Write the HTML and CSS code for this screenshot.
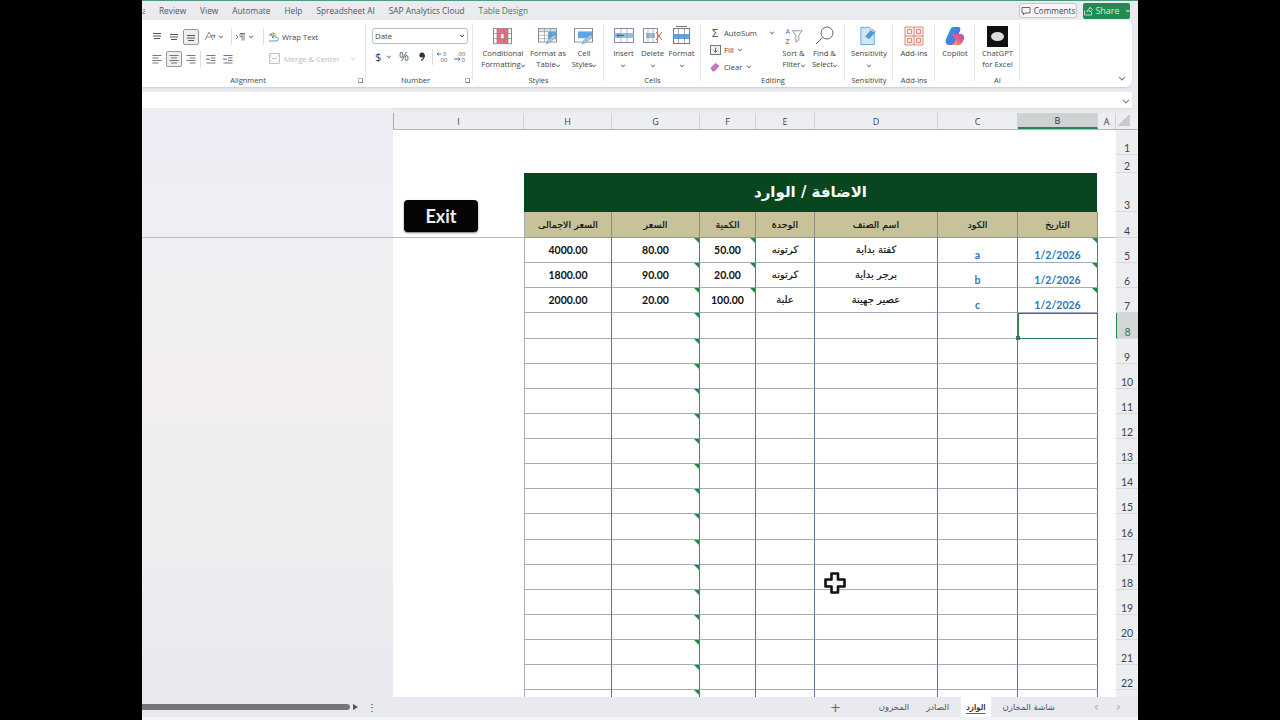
FILE: index.html
```html
<!DOCTYPE html>
<html lang="en">
<head>
<meta charset="utf-8">
<title>Sheet</title>
<link rel="stylesheet" href="styles.css">
</head>
<body>
<div class="screen">
<div class="window">
  <div class="tabs">
    <div class="tablist">
      <span class="cut">a</span><span>Review</span><span>View</span><span>Automate</span><span>Help</span><span>Spreadsheet AI</span><span>SAP Analytics Cloud</span><span class="tgreen">Table Design</span>
    </div>
    <div class="tabactions">
      <span class="comments"><svg width="10" height="10" viewBox="0 0 10 10"><path d="M1 1.500h8v5.500H4L2.500 8.700V7H1z" fill="none" stroke="#444" stroke-width=".8"/></svg>Comments</span>
      <span class="share"><svg width="10" height="10" viewBox="0 0 10 10"><path d="M1.500 4.500v4.500h7V6M4 6c0-2 1.500-3.500 3-3.500V1l2.500 2.500L7 6V4.500c-1 0-2 .5-3 1.500" fill="none" stroke="#d6eee0" stroke-width=".8"/></svg>Share<i class="chev cw"></i></span>
    </div>
  </div>

  <div class="ribbon">
    <div class="group galign">
      <div class="gbody acol">
        <div class="arow">
          <span class="ic"><svg width="12" height="10" viewBox="0 0 12 10"><path d="M2 1.500h8M2 4h8M3 6.500h6" stroke="#555"/></svg></span>
          <span class="ic"><svg width="12" height="10" viewBox="0 0 12 10"><path d="M2 2.500h8M2 5h8M3 7.500h6" stroke="#555"/></svg></span>
          <span class="ic sel"><svg width="12" height="10" viewBox="0 0 12 10"><path d="M2 3.500h8M2 6h8M3 8.500h6" stroke="#555"/></svg></span>
          <span class="ic orient"><svg width="12" height="11" viewBox="0 0 12 11"><path d="M1 9L5 1l4 8M2.500 6h5" stroke="#777" fill="none" stroke-width=".8"/><path d="M7 5l4-1-1 3" stroke="#2a79c4" fill="none"/></svg><i class="chev"></i></span>
          <span class="vsep"></span>
          <span class="ic dirn"><svg width="11" height="10" viewBox="0 0 11 10"><path d="M1 3l2 2-2 2M5 1.500h5M7 1.500v7M9 1.500v7M7 5C4 5 4 1.500 7 1.500" stroke="#555" fill="none" stroke-width=".8"/></svg><i class="chev"></i></span>
          <span class="vsep"></span>
          <span class="ic"><svg width="13" height="12" viewBox="0 0 13 12"><text x="2" y="5" class="svgt">ab</text><path d="M2 10h7c3 0 3-4 0-4H5M6.500 4.500L5 6l1.500 1.500" stroke="#2a79c4" fill="none" stroke-width=".8"/></svg></span>
          <span class="atext">Wrap Text</span>
        </div>
        <div class="arow">
          <span class="ic"><svg width="12" height="10" viewBox="0 0 12 10"><path d="M1.500 1.500h9M1.500 4h6M1.500 6.500h9M1.500 9h6" stroke="#555" stroke-width=".8"/></svg></span>
          <span class="ic sel"><svg width="12" height="10" viewBox="0 0 12 10"><path d="M1.500 1.500h9M3 4h6M1.500 6.500h9M3 9h6" stroke="#555" stroke-width=".8"/></svg></span>
          <span class="ic"><svg width="12" height="10" viewBox="0 0 12 10"><path d="M1.500 1.500h9M4.500 4h6M1.500 6.500h9M4.500 9h6" stroke="#555" stroke-width=".8"/></svg></span>
          <span class="vsep"></span>
          <span class="ic"><svg width="12" height="10" viewBox="0 0 12 10"><path d="M1.500 1.500h9M6 4h4.500M6 6.500h4.500M1.500 9h9" stroke="#555" stroke-width=".8"/><path d="M5 5.200H1" stroke="#2a79c4"/></svg></span>
          <span class="ic"><svg width="12" height="10" viewBox="0 0 12 10"><path d="M1.500 1.500h9M6 4h4.500M6 6.500h4.500M1.500 9h9" stroke="#555" stroke-width=".8"/><path d="M1 5.200h4" stroke="#2a79c4"/></svg></span>
          <span class="ic mergei"><svg width="11" height="11" viewBox="0 0 11 11"><path d="M.5.500h10v10H.5zM3 5.500h5M.5 3h2M8.500 3h2M.5 8h2M8.500 8h2" stroke="#c4c4c4" fill="none"/></svg></span>
          <span class="atext off">Merge &amp; Center</span><i class="chev offc"></i>
        </div>
      </div>
      <div class="glabel">Alignment</div>
      <i class="launcher"></i>
    </div>

    <div class="group gnumber">
      <div class="gbody ncol">
        <div class="combo"><span>Date</span><i class="chev dark"></i></div>
        <div class="nrow">
          <span class="dollar">$</span><i class="chev"></i><span class="pct">%</span>
          <svg class="comma" width="6" height="9" viewBox="0 0 6 9"><circle cx="3" cy="3" r="2.600" fill="#333"/><path d="M5.500 3c0 3-1.500 4.500-3.500 5.500" stroke="#333" fill="none" stroke-width="1.200"/></svg>
          <span class="vsep"></span>
          <svg width="14" height="11" viewBox="0 0 14 11"><path d="M1 3h4M2.500 1.500L1 3l1.500 1.500" stroke="#2a79c4" fill="none"/><text x="7" y="5" class="svgt">0</text><text x="3" y="10.500" class="svgt">.00</text></svg>
          <svg width="14" height="11" viewBox="0 0 14 11"><text x="4" y="5" class="svgt">.00</text><path d="M1 8h6M5.500 6.500L7 8 5.500 9.500" stroke="#2a79c4" fill="none"/><text x="8.500" y="10.500" class="svgt">0</text></svg>
        </div>
      </div>
      <div class="glabel">Number</div>
      <i class="launcher"></i>
    </div>

    <div class="group gstyles">
      <div class="gbody big">
        <div class="bigb wcf"><svg class="flat" preserveAspectRatio="none" width="20" height="20" viewBox="0 0 20 20"><rect x=".5" y=".5" width="18" height="18" fill="#fff" stroke="#888"/><path d="M4 .5h11v6H4zM4 12.500h11v6H4z" fill="#ee6d80"/><path d="M11 6.500h4v6h-4zM4 6.500h4v6H4z" fill="#ee6d80"/><path d="M.5 6.500h18M.5 12.500h18M4 .5v18M11 .5v18M15 .5v18" stroke="#777" stroke-width=".7" fill="none"/></svg><span>Conditional<br>Formatting<i class="chev"></i></span></div>
        <div class="bigb wft"><svg class="flat" preserveAspectRatio="none" width="20" height="20" viewBox="0 0 20 20"><rect x=".5" y=".5" width="18" height="16" fill="#fff" stroke="#888"/><rect x=".5" y=".5" width="18" height="4" fill="#cfe0f2" stroke="#888" stroke-width=".7"/><path d="M10 4.500h8.500v8H10z" fill="#5da5e6"/><path d="M.5 8.500h18M.5 12.500h18M6.500 .5v16M12.500 .5v16" stroke="#888" stroke-width=".6"/><path d="M8 19l2-5 6-6 3 2-6 6z" fill="#a9c6dd" stroke="#5f8fb3" stroke-width=".6"/></svg><span>Format as<br>Table<i class="chev"></i></span></div>
        <div class="bigb wcs"><svg class="flat" preserveAspectRatio="none" width="20" height="20" viewBox="0 0 20 20"><rect x=".5" y=".5" width="18" height="16" fill="#fff" stroke="#888"/><path d="M4 4h14v8H4z" fill="#5da5e6"/><path d="M8 19l2-5 6-6 3 2-6 6z" fill="#a9c6dd" stroke="#5f8fb3" stroke-width=".6"/></svg><span>Cell<br>Styles<i class="chev"></i></span></div>
      </div>
      <div class="glabel">Styles</div>
    </div>

    <div class="group gcells">
      <div class="gbody big">
        <div class="bigb w29"><svg width="20" height="20" viewBox="0 0 20 20"><rect x=".5" y="2.500" width="19" height="14" fill="#fff" stroke="#88a"/><rect x=".5" y="7" width="19" height="5" fill="#8fc0ea"/><path d="M7 2.500v14M13 2.500v14" stroke="#888" stroke-width=".6"/><path d="M10 9.500H3M5 7.500l-2 2 2 2" stroke="#1d6fbd" fill="none"/></svg><span>Insert<br><i class="chev"></i></span></div>
        <div class="bigb w29"><svg width="20" height="20" viewBox="0 0 20 20"><rect x=".5" y="2.500" width="14" height="14" fill="#fff" stroke="#88a"/><rect x="3" y="7" width="9" height="5" fill="#8fc0ea"/><path d="M5 2.500v14M10 2.500v14" stroke="#888" stroke-width=".6"/><path d="M13 6l6 8M19 6l-6 8" stroke="#d8604f" stroke-width="1"/></svg><span>Delete<br><i class="chev"></i></span></div>
        <div class="bigb w29"><svg width="20" height="20" viewBox="0 0 20 20"><rect x="1.500" y="2.500" width="16" height="15" fill="#fff" stroke="#777"/><rect x="1.500" y="8" width="16" height="5" fill="#5da5e6"/><path d="M6.500 2.500v15M12.500 2.500v15" stroke="#777" stroke-width=".6"/><path d="M4 .5h11" stroke="#777"/></svg><span>Format<br><i class="chev"></i></span></div>
      </div>
      <div class="glabel">Cells</div>
    </div>

    <div class="group gediting">
      <div class="gbody big start">
        <div class="ecol">
          <div class="erow"><span class="eic sigma">Σ</span><span>AutoSum</span><i class="chev gapc"></i></div>
          <div class="erow"><span class="eic"><svg width="11" height="10" viewBox="0 0 11 10"><rect x=".5" y=".5" width="10" height="9" fill="#eef3f8" stroke="#777"/><path d="M5.500 2.500v5M3.500 5.500l2 2 2-2" stroke="#2a79c4" fill="none"/></svg></span><span>Fill</span><i class="chev"></i></div>
          <div class="erow"><span class="eic"><svg width="10" height="10" viewBox="0 0 11 11"><path d="M1 6.500L6 1.500l4 3-5 5.500H3z" fill="#c874c8" stroke="#a04fa0" stroke-width=".6"/></svg></span><span>Clear</span><i class="chev"></i></div>
        </div>
        <div class="bigb w31"><svg width="20" height="20" viewBox="0 0 20 21"><text x="1" y="8.500" class="svga">A</text><text x="1" y="19" class="svgz">Z</text><path d="M8.500 5h10L15 10v5l-3 2v-7z" fill="#fff" stroke="#777" stroke-width=".8"/></svg><span>Sort &amp;<br>Filter<i class="chev"></i></span></div>
        <div class="bigb w31"><svg width="22" height="20" viewBox="0 0 22 20"><circle cx="13" cy="7" r="6" fill="#fff" stroke="#666"/><path d="M8.500 11.500L2 18" stroke="#666"/></svg><span>Find &amp;<br>Select<i class="chev"></i></span></div>
      </div>
      <div class="glabel">Editing</div>
    </div>

    <div class="group gsens">
      <div class="gbody big"><div class="bigb w48"><svg width="20" height="21" viewBox="0 0 20 21"><path d="M1.500 1.500h9l5 5v13h-14z" fill="#cfe6f7" stroke="#5fa7dc"/><path d="M6 11l7-8 4 3-7 8z" fill="#4f9bd8"/><path d="M12 4l3 2" stroke="#fff"/></svg><span>Sensitivity<br><i class="chev"></i></span></div></div>
      <div class="glabel">Sensitivity</div>
    </div>

    <div class="group gaddin">
      <div class="gbody big"><div class="bigb w42"><svg width="20" height="20" viewBox="0 0 20 20"><path d="M1 1h18v18H1zM1 10h18M10 1v18M3.500 3.500h4v4h-4zM12.500 3.500h4v4h-4zM3.500 12.500h4v4h-4zM12.500 12.500h4v4h-4z" fill="#fbeeea" stroke="#d9705d" stroke-width=".8"/></svg><span>Add-ins</span></div></div>
      <div class="glabel">Add-ins</div>
    </div>

    <div class="group gcop">
      <div class="gbody big"><div class="bigb w40"><svg width="20" height="20" viewBox="0 0 20 20"><defs><linearGradient id="cpa" x1="0" y1="0" x2="1" y2="1"><stop offset="0" stop-color="#18b6c9"/><stop offset=".5" stop-color="#3f7ee8"/><stop offset="1" stop-color="#b44fd8"/></linearGradient><linearGradient id="cpb" x1="0" y1="1" x2="1" y2="0"><stop offset="0" stop-color="#f4a62a"/><stop offset=".55" stop-color="#e85b8b"/><stop offset="1" stop-color="#8b5be0"/></linearGradient></defs><path d="M8 1h5c2 0 3 1 2 4l-4 9c-1 3-2 5-5 5H4C1 19 0 16 1 13l4-9C6 2 6.500 1 8 1z" fill="url(#cpa)"/><path d="M7 8h8c3 0 5 2 4 5l-1 2c-1 3-3 4-5 4H8c2-1 3-3 3-5z" fill="url(#cpb)"/></svg><span>Copilot</span></div></div>
      <div class="glabel">&nbsp;</div>
    </div>

    <div class="group gai">
      <div class="gbody big"><div class="bigb w44"><span class="gptlogo"><i></i></span><span>ChatGPT<br>for Excel</span></div></div>
      <div class="glabel">AI</div>
    </div>
    <div class="rest"><i class="chev big-chev"></i></div>
  </div>

  <div class="formula"><i class="chev big-chev"></i></div>

  <div class="sheet">
    <div class="gutter"><div class="panel"></div></div>
    <div class="gridwrap">
      <div class="row head">
        <span>I</span><span>H</span><span>G</span><span>F</span><span>E</span><span>D</span><span>C</span><span class="hsel">B</span><span>A</span><span class="corner"></span>
      </div>
      <div class="row r25 blank"><span class="rn">1</span></div>
      <div class="row r18 blank"><span class="rn">2</span></div>
      <div class="row r39">
        <span class="free"></span><span class="title">الاضافة / الوارد</span><span class="free"></span><span class="rn">3</span>
      </div>
      <div class="row r26 colhead">
        <span class="free"></span><span>السعر الاجمالى</span><span>السعر</span><span>الكمية</span><span>الوحدة</span><span>اسم الصنف</span><span>الكود</span><span>التاريخ</span><span class="free"></span><span class="rn">4</span>
      </div>
      <div class="row data">
        <span class="free"></span><span>4000.00</span><span class="tick">80.00</span><span class="tick">50.00</span><span class="ar">كرتونه</span><span class="ar">كفتة بداية</span><span class="blue">a</span><span class="blue tick">1/2/2026</span><span class="free"></span><span class="rn">5</span>
      </div>
      <div class="row data">
        <span class="free"></span><span>1800.00</span><span class="tick">90.00</span><span class="tick">20.00</span><span class="ar">كرتونه</span><span class="ar">برجر بداية</span><span class="blue">b</span><span class="blue tick">1/2/2026</span><span class="free"></span><span class="rn">6</span>
      </div>
      <div class="row data">
        <span class="free"></span><span>2000.00</span><span class="tick">20.00</span><span class="tick">100.00</span><span class="ar">علبة</span><span class="ar">عصير جهينة</span><span class="blue">c</span><span class="blue tick">1/2/2026</span><span class="free"></span><span class="rn">7</span>
      </div>
      <div class="row data"><span class="free"></span><span></span><span class="tick"></span><span></span><span></span><span></span><span></span><span class="active"></span><span class="free"></span><span class="rn rsel">8</span></div>
      <div class="row data"><span class="free"></span><span></span><span class="tick"></span><span></span><span></span><span></span><span></span><span></span><span class="free"></span><span class="rn">9</span></div>
      <div class="row data"><span class="free"></span><span></span><span class="tick"></span><span></span><span></span><span></span><span></span><span></span><span class="free"></span><span class="rn">10</span></div>
      <div class="row data"><span class="free"></span><span></span><span class="tick"></span><span></span><span></span><span></span><span></span><span></span><span class="free"></span><span class="rn">11</span></div>
      <div class="row data"><span class="free"></span><span></span><span class="tick"></span><span></span><span></span><span></span><span></span><span></span><span class="free"></span><span class="rn">12</span></div>
      <div class="row data"><span class="free"></span><span></span><span class="tick"></span><span></span><span></span><span></span><span></span><span></span><span class="free"></span><span class="rn">13</span></div>
      <div class="row data"><span class="free"></span><span></span><span class="tick"></span><span></span><span></span><span></span><span></span><span></span><span class="free"></span><span class="rn">14</span></div>
      <div class="row data"><span class="free"></span><span></span><span class="tick"></span><span></span><span></span><span></span><span></span><span></span><span class="free"></span><span class="rn">15</span></div>
      <div class="row data"><span class="free"></span><span></span><span class="tick"></span><span></span><span></span><span></span><span></span><span></span><span class="free"></span><span class="rn">16</span></div>
      <div class="row data"><span class="free"></span><span></span><span class="tick"></span><span></span><span></span><span></span><span></span><span></span><span class="free"></span><span class="rn">17</span></div>
      <div class="row data"><span class="free"></span><span></span><span class="tick"></span><span></span><span></span><span></span><span></span><span></span><span class="free"></span><span class="rn">18</span></div>
      <div class="row data"><span class="free"></span><span></span><span class="tick"></span><span></span><span></span><span></span><span></span><span></span><span class="free"></span><span class="rn">19</span></div>
      <div class="row data"><span class="free"></span><span></span><span class="tick"></span><span></span><span></span><span></span><span></span><span></span><span class="free"></span><span class="rn">20</span></div>
      <div class="row data"><span class="free"></span><span></span><span class="tick"></span><span></span><span></span><span></span><span></span><span></span><span class="free"></span><span class="rn">21</span></div>
      <div class="row data"><span class="free"></span><span></span><span class="tick"></span><span></span><span></span><span></span><span></span><span></span><span class="free"></span><span class="rn">22</span></div>
      <div class="row data"><span class="free"></span><span></span><span class="tick"></span><span></span><span></span><span></span><span></span><span></span><span class="free"></span><span class="rn"></span></div>
      <button class="exit">Exit</button>
      <svg class="cursor" width="24" height="24" viewBox="0 0 24 24"><path d="M8.500 2.500h6.500v6h6.500v7H15v6H8.500v-6H2.500v-7h6z" fill="#f4f6fa" stroke="#111" stroke-width="2.600" stroke-linejoin="round"/></svg>
    </div>
  </div>

  <div class="bottom">
    <div class="hscroll"><span class="thumb"></span><i class="arrow"></i><span class="dots">⋮</span></div>
    <div class="sheets">
      <span class="plus">+</span>
      <span class="stab">المخزون</span><span class="stab">الصادر</span><span class="stab on">الوارد</span><span class="stab">شاشة المخازن</span>
      <span class="nav first">‹</span><span class="nav">›</span>
    </div>
  </div>
</div>
</div>
</body>
</html>
```
FILE: styles.css
```css
* { box-sizing: border-box; }
html, body { margin: 0; height: 100%; background: #000; overflow: hidden; }
.screen { width: 1280px; height: 720px; display: flex; justify-content: center; background: #000; }
.window { width: 996px; height: 720px; background: #e9ebf0; border-top: 1px solid #4f9a7e; display: flex; flex-direction: column; font-family: "Open Sans", "Noto Sans", sans-serif; color: #444; font-size: 8px; overflow: hidden; }

.chev { display: inline-block; width: 4px; height: 4px; border-right: 1px solid #666; border-bottom: 1px solid #666; transform: rotate(45deg) scale(.8); margin: 0 0 2px 4px; flex: none; }
.chev.cw { border-color: #dff; }

.tabs { height: 19px; display: flex; justify-content: space-between; align-items: center; padding-right: 8px; flex: none; }
.tablist { display: flex; gap: 14px; font-size: 8.300px; color: #555; align-items: center; }
.cut { width: 3px; overflow: hidden; }
.tgreen { color: #2c8a63; }
.tabactions { display: flex; gap: 6px; align-items: center; }
.comments { height: 15px; width: 58px; border: 1px solid #c6c6c6; border-radius: 3px; background: #f6f6f8; display: flex; align-items: center; justify-content: center; gap: 3px; color: #444; font-size: 8.200px; }
.share { height: 16px; width: 47px; border-radius: 2px; background: #238a53; color: #d6eee0; display: flex; align-items: center; justify-content: center; gap: 2px; font-size: 9px; }

.ribbon { height: 67px; margin-right: 6px; background: #fff; border-radius: 0 6px 6px 0; display: flex; flex: none; box-shadow: 0 1px 2px #ccc; }
.group { position: relative; display: flex; flex-direction: column; height: 100%; background: linear-gradient(#e6e6ea, #e6e6ea) right 3px / 1px 58px no-repeat; flex: none; }
.gbody { flex: 1; min-height: 0; }
.glabel { height: 14px; line-height: 14px; text-align: center; font-size: 7.500px; color: #444; flex: none; }
.launcher { position: absolute; right: 3px; bottom: 4px; width: 5px; height: 5px; border: 1px solid #888; border-top-color: #bbb; border-left-color: #bbb; }
.galign { width: 224px; }
.galign .glabel { padding-right: 12px; }
.gnumber { width: 107px; }
.gnumber .glabel { padding-right: 8px; }
.gstyles { width: 131px; }
.gcells { width: 97px; }
.gediting { width: 144px; }
.gsens { width: 48px; }
.gaddin { width: 42px; }
.gcop { width: 40px; }
.gai { width: 45px; }
.rest { flex: 1; display: flex; justify-content: flex-end; align-items: flex-end; padding: 0 7px 7px 0; }
.big-chev { width: 6px; height: 6px; margin: 0; border-color: #666; }

.acol { display: flex; flex-direction: column; gap: 5px; padding: 8px 0 0 6px; }
.arow { display: flex; align-items: center; height: 17px; }
.ic { width: 17px; height: 16px; display: flex; align-items: center; justify-content: center; flex: none; }
.ic.sel { background: #eee; border: 1px solid #999; border-radius: 2px; width: 16px; margin: 0 .5px; }
.ic.orient { width: 26px; margin-left: 5px; justify-content: flex-start; }
.ic.dirn { width: 29px; justify-content: flex-start; padding-left: 2px; }
.ic .chev { margin-left: 3px; }
.ic.mergei { margin-left: 30px; }
.vsep { width: 1px; height: 16px; background: #ddd; margin: 0 1px; flex: none; }
.atext { font-size: 7.600px; color: #444; margin-left: 0; }
.atext.off { color: #bbb; margin-left: 1px; }
.offc { margin-left: 11px; border-color: #ccc; }
.svgt { font: 6px "Open Sans", sans-serif; fill: #555; }
.svga { font: 7.500px "Open Sans", sans-serif; fill: #2a79c4; }
.svgz { font: 7.500px "Open Sans", sans-serif; fill: #555; }

.ncol { padding: 8px 6px 0 6px; display: flex; flex-direction: column; gap: 5px; }
.combo { height: 16px; width: 96px; border: 1px solid #bbb; border-radius: 3px; display: flex; justify-content: space-between; align-items: center; padding: 0 3px 0 2px; font-size: 7.800px; color: #444; }
.combo .dark { border-color: #333; }
.nrow { display: flex; align-items: center; padding-left: 3px; height: 15px; }
.nrow .chev { margin: 0 0 2px 5px; }
.dollar { font-size: 11.500px; color: #444; width: 7px; }
.pct { font-size: 12px; color: #555; width: 12px; margin-left: 8px; }
.comma { margin-left: 8px; }
.nrow .vsep { margin: 0 3px 0 7px; }
.nrow svg + svg { margin-left: 3px; }

.big { display: flex; padding: 6px 0 0 0; justify-content: center; }
.big.start { justify-content: flex-start; }
.bigb { display: flex; flex-direction: column; align-items: center; text-align: center; line-height: 10.500px; font-size: 7.700px; color: #444; flex: none; }
.bigb svg { flex: none; height: 20px; margin-bottom: 2px; }
.bigb svg.flat { height: 17px; margin: 2px 0 3px; }
.bigb > span { display: block; white-space: nowrap; }
.bigb .chev { margin-left: 3px; }
.bigb br + .chev { margin: 0; }
.gstyles .big { justify-content: flex-start; padding-left: 1px; }
.wcf { width: 58px; }
.wft { width: 32px; }
.wcs { width: 40px; }
.w29 { width: 29px; }
.w31 { width: 31px; }
.w48 { width: 47px; }
.w42 { width: 41px; }
.w40 { width: 39px; }
.w44 { width: 44px; }
.gptlogo { width: 21px; height: 21px; background: #111; display: flex !important; align-items: center; justify-content: center; margin-bottom: 1px; }
.gptlogo i { width: 13px; height: 9px; background: #ddd; border-radius: 50%; display: block; }
.ecol { display: flex; flex-direction: column; width: 77px; gap: 4px; font-size: 7.700px; color: #444; padding: 0 0 0 9px; }
.erow { display: flex; align-items: center; height: 13px; gap: 1px; }
.eic { width: 13px; display: flex; justify-content: flex-start; align-items: center; }
.sigma { font-size: 11px; line-height: 1; padding-left: 2px; }
.erow .chev { margin-left: 3px; }
.erow .gapc { margin-left: 12px; }

.formula { height: 16px; margin: 5px 6px 0 0; background: #fff; flex: none; display: flex; justify-content: flex-end; align-items: center; padding-right: 3px; box-shadow: 0 1px 1px #ddd; }

.sheet { flex: 1; min-height: 0; display: flex; }
.gutter { width: 251px; flex: none; display: flex; flex-direction: column; }
.panel { flex: 1; background: linear-gradient(180deg, #ecedf5 0%, #eeeef3 20%, #f2eeee 45%, #eeecef 70%, #e8eaef 100%); }
.panel::after { content: ""; display: block; height: 1px; background: #bcbcc0; margin-top: 129px; }
.gridwrap { position: relative; width: 745px; flex: none; overflow: hidden; background: #fff; margin-top: 5px; }

.row { display: grid; grid-template-columns: 131px 88px 88px 56px 59px 123px 80px 80px 18px 22px; height: 25.130px; }
.row > span { display: flex; align-items: center; justify-content: center; }
.head { height: 17px; background: #eceef1; border-bottom: 1px solid #b4b4b6; font-size: 9px; color: #444; }
.head > span { border-right: 1px solid #d0d2d6; }
.head > span:first-child { border-left: 1px solid #aaa; }
.hsel { background: #cfd1d3; border-bottom: 2px solid #1f8a50; color: #333; }
.corner { background: linear-gradient(135deg, transparent 50%, #c8cacd 50%); margin: 2px 8px 3px 0; border: none !important; }
.r25 { height: 25px; }
.r18 { height: 18px; }
.r39 { height: 39px; grid-template-columns: 131px 573px 19px 22px; }
.r26 { height: 26px; }
.blank { grid-template-columns: 723px 22px; }
.rn { grid-column: -2; background: #eceef1; border-bottom: 1px solid #d8d9dc; font: 10.500px "Lato", "Open Sans", sans-serif; color: #444; align-items: flex-end !important; padding-bottom: 0; }
.rsel { background: #d3d5d7; border-left: 1px solid #1f8a50; color: #1f7a50; }
.title { background: #07461f; color: #fff; font: bold 15px "DejaVu Sans", sans-serif; border-bottom: 1px solid #07461f; }
.colhead > span:not(.rn):not(.free) { background: #c7c29a; color: #111; font: 9.500px "DejaVu Sans", sans-serif; -webkit-text-stroke: .2px #111; border-right: 1px solid #8a8c85; border-bottom: 1px solid #9a9a88; }
.colhead .free { border-bottom: 1px solid #bcbcc0; }
.data > span:not(.rn):not(.free) { border-right: 1px solid #5f7390; border-bottom: 1px solid #a3adbd; font: bold 10.500px "Lato", "Open Sans", sans-serif; color: #111; position: relative; }
.data > span:nth-child(2), .colhead > span:nth-child(2) { border-left: 1px solid #aab; }
.data > .ar { font: 10px "DejaVu Sans", sans-serif !important; -webkit-text-stroke: .2px #111; padding-bottom: 1px; }
.data > .blue { color: #2f75b5 !important; align-items: flex-end; padding-bottom: 1px; }
.tick::after { content: ""; position: absolute; top: 0; right: 0; border-top: 5px solid #1c8c45; border-left: 5px solid transparent; }
.data > .active { outline: 1.500px solid #2a8050; outline-offset: -1.500px; border-right-color: transparent !important; }
.data > .active::after { content: ""; position: absolute; left: -2px; bottom: -2px; width: 4px; height: 4px; background: #2a8050; }
.exit { position: absolute; left: 11px; top: 87px; width: 74px; height: 32px; background: #050505; color: #eee; border: 0; border-radius: 4px; font: bold 18px "Lato", "Open Sans", sans-serif; box-shadow: 0 1px 2px #777; }
.cursor { position: absolute; left: 430px; top: 458px; }

.bottom { height: 23px; flex: none; display: flex; background: #e9eaef; border-bottom: 3px solid #f3f3f5; }
.hscroll { width: 251px; display: flex; align-items: center; }
.thumb { width: 208px; height: 6px; background: #76767a; border-radius: 0 3px 3px 0; }
.arrow { width: 0; height: 0; border-left: 5px solid #555; border-top: 3px solid transparent; border-bottom: 3px solid transparent; margin-left: 3px; }
.dots { margin-left: 9px; font-size: 10px; color: #333; }
.sheets { flex: 1; display: flex; align-items: center; justify-content: flex-end; gap: 7px; padding-right: 18px; font: 8.500px "DejaVu Sans", sans-serif; color: #555; }
.plus { font-size: 13px; margin-right: 26px; color: #666; }
.stab { padding: 0 5px; height: 20px; display: flex; align-items: center; }
.stab.on { background: #fff; color: #111; -webkit-text-stroke: .2px #111; text-decoration: underline #1f8a50 1px; text-underline-offset: 3px; }
.nav { font-size: 12px; color: #aaa; margin-left: 11px; width: 4px; }
.nav.first { margin-left: 27px; }
```
